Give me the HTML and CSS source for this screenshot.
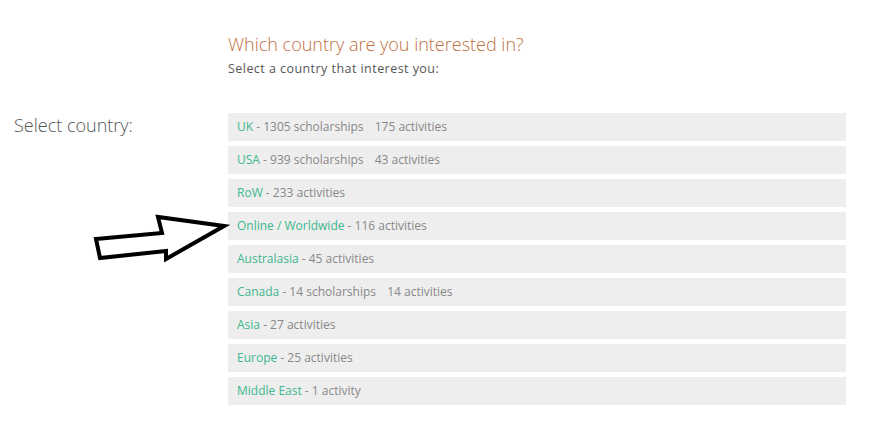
FILE: index.html
```html
<!DOCTYPE html>
<html>
<head>
<meta charset="utf-8">
<link rel="stylesheet" href="styles.css">
</head>
<body>
<div class="page">
  <div class="side">
    <div class="side-label">Select country:</div>
    <svg class="arrow" width="140" height="60" viewBox="90 210 140 60">
      <polygon points="96,239 162,233 158,217 224,226 166,259 166,251 100,258" fill="#fff" stroke="#000" stroke-width="4" stroke-linejoin="miter"/>
    </svg>
  </div>
  <div class="main">
    <h1 class="title">Which country are you interested in?</h1>
    <p class="sub">Select a country that interest you:</p>
    <ul class="list">
      <li class="row"><span class="name">UK</span> - 1305 scholarships <span class="gap"></span>175 activities</li>
      <li class="row"><span class="name">USA</span> - 939 scholarships <span class="gap"></span>43 activities</li>
      <li class="row"><span class="name">RoW</span> - 233 activities</li>
      <li class="row"><span class="name">Online / Worldwide</span> - 116 activities</li>
      <li class="row"><span class="name">Australasia</span> - 45 activities</li>
      <li class="row"><span class="name">Canada</span> - 14 scholarships <span class="gap"></span>14 activities</li>
      <li class="row"><span class="name">Asia</span> - 27 activities</li>
      <li class="row"><span class="name">Europe</span> - 25 activities</li>
      <li class="row"><span class="name">Middle East</span> - 1 activity</li>
    </ul>
  </div>
</div>
</body>
</html>
```
FILE: styles.css
```css
html, body {
  margin: 0;
  padding: 0;
  background: #fff;
}
body {
  font-family: "Open Sans", "Liberation Sans", sans-serif;
}
.page {
  display: flex;
  width: 876px;
  height: 432px;
}
.side {
  width: 228px;
  position: relative;
}
.side-label {
  margin: 113px 0 0 14px;
  font-size: 18px;
  font-weight: 300;
  color: #555;
  line-height: 24px;
}
.arrow {
  position: absolute;
  left: 90px;
  top: 210px;
}
.main {
  width: 618px;
  padding-top: 31px;
}
.title {
  margin: 0;
  font-size: 18px;
  font-weight: 300;
  color: #c0703f;
  line-height: 26px;
}
.sub {
  margin: 3px 0 0;
  font-size: 12.5px;
  font-weight: 400;
  letter-spacing: 0.45px;
  color: #555;
  line-height: 18px;
}
.list {
  list-style: none;
  margin: 35px 0 0;
  padding: 0;
  display: flex;
  flex-direction: column;
  gap: 5px;
}
.row {
  background: #eeeeee;
  height: 28px;
  line-height: 28px;
  padding-left: 9px;
  font-size: 12px;
  color: #888;
}
.name {
  color: #3db88f;
}
.gap {
  display: inline-block;
  width: 8px;
}
```
